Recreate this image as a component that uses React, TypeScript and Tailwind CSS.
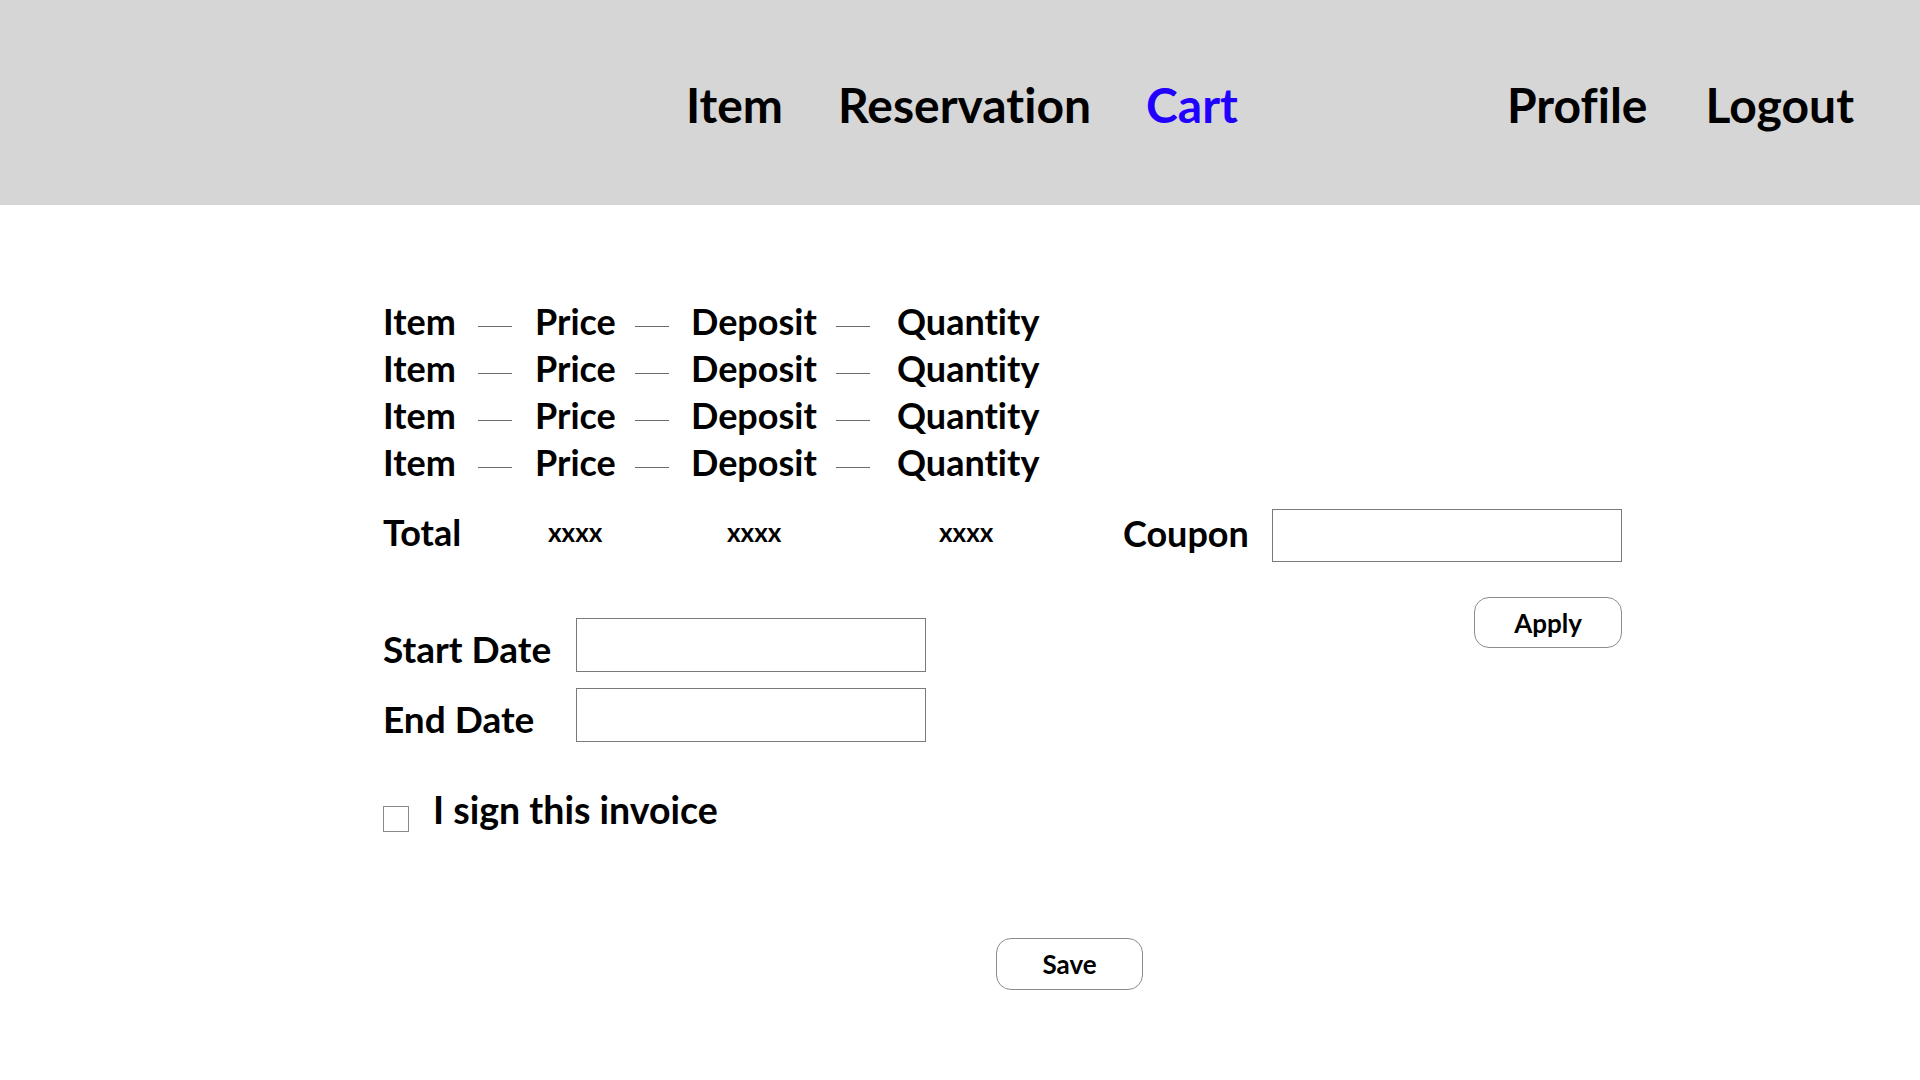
import React, { useState } from "react";

// Cart page – rental items with totals, coupon and rental dates
type Line = { item: string; price: string; deposit: string; quantity: string };

const lines: Line[] = [
  { item: "Item", price: "Price", deposit: "Deposit", quantity: "Quantity" },
  { item: "Item", price: "Price", deposit: "Deposit", quantity: "Quantity" },
  { item: "Item", price: "Price", deposit: "Deposit", quantity: "Quantity" },
  { item: "Item", price: "Price", deposit: "Deposit", quantity: "Quantity" },
];

const Dash: React.FC<{ w: string }> = ({ w }) => (
  <span className={`${w} flex pt-[28px]`}>
    <span className="block h-px w-[34px] bg-[#6b6b6b]" />
  </span>
);

const App: React.FC = () => {
  const [coupon, setCoupon] = useState("");
  const [start, setStart] = useState("");
  const [end, setEnd] = useState("");
  const [signed, setSigned] = useState(false);

  return (
    <div className="min-h-screen bg-white font-['Lato','Open_Sans',sans-serif] font-bold text-black [font-variant-ligatures:none]">
      {/* top nav */}
      <header className="flex h-[205px] items-center bg-[#d6d6d6] pl-[686px] pr-[66px] pt-[5px] text-[48px] leading-none">
        <nav className="flex gap-[55px]">
          <a className="cursor-pointer">Item</a>
          <a className="cursor-pointer">Reservation</a>
          <a className="cursor-pointer text-[#2200ff]">Cart</a>
        </nav>
        <nav className="ml-auto flex gap-[58px]">
          <a className="cursor-pointer">Profile</a>
          <a className="cursor-pointer">Logout</a>
        </nav>
      </header>

      <main className="w-[1622px] pl-[383px] pt-[93px]">
        {/* cart lines */}
        <div className="text-[36px] leading-[47px]">
          {lines.map((l, i) => (
            <div key={i} className="flex items-start">
              <span className="w-[95px]">{l.item}</span>
              <Dash w="w-[57px]" />
              <span className="w-[100px]">{l.price}</span>
              <Dash w="w-[56px]" />
              <span className="w-[145px]">{l.deposit}</span>
              <Dash w="w-[61px]" />
              <span>{l.quantity}</span>
            </div>
          ))}
        </div>

        {/* totals + coupon */}
        <div className="mt-[23px] flex h-[53px] items-center leading-[1.2]">
          <span className="w-[165px] pb-[5px] text-[36px]">Total</span>
          <span className="w-[179px] pb-[5px] text-[26px]">xxxx</span>
          <span className="w-[212px] pb-[5px] text-[26px]">xxxx</span>
          <span className="w-[184px] pb-[5px] text-[26px]">xxxx</span>
          <span className="w-[149px] pb-[3px] text-[36px]">Coupon</span>
          <input
            value={coupon}
            onChange={(e) => setCoupon(e.target.value)}
            className="h-[53px] w-[350px] border border-[#7a7a7a] px-3 text-[24px] font-normal outline-none"
          />
        </div>

        <div className="mt-[35px] flex justify-between">
          <div className="pt-[21px]">
            {/* rental dates */}
            <div className="flex flex-col gap-[16px]">
              <label className="flex h-[54px] items-center">
                <span className="w-[193px] pt-[8px] text-[37px] leading-[1.2]">Start Date</span>
                <input
                  value={start}
                  onChange={(e) => setStart(e.target.value)}
                  className="h-[54px] w-[350px] border border-[#7a7a7a] px-3 text-[24px] font-normal outline-none"
                />
              </label>
              <label className="flex h-[54px] items-center">
                <span className="w-[193px] pt-[8px] text-[37px] leading-[1.2]">End Date</span>
                <input
                  value={end}
                  onChange={(e) => setEnd(e.target.value)}
                  className="h-[54px] w-[350px] border border-[#7a7a7a] px-3 text-[24px] font-normal outline-none"
                />
              </label>
            </div>

            <label className="mt-[45px] flex cursor-pointer items-start gap-[24px]">
              <span
                onClick={() => setSigned(!signed)}
                className="mt-[19px] flex h-[26px] w-[26px] items-center justify-center border border-[#8a8a8a] text-[18px] leading-none"
              >
                {signed ? "✓" : ""}
              </span>
              <span className="text-[37.5px] leading-[1.2]">I sign this invoice</span>
            </label>
          </div>

          <button className="h-[51px] w-[148px] rounded-[15px] border border-[#8c8c8c] text-[26px] leading-none">
            Apply
          </button>
        </div>

        <div className="mt-[106px] pl-[613px]">
          <button className="h-[52px] w-[147px] rounded-[15px] border border-[#8c8c8c] text-[26px] leading-none">
            Save
          </button>
        </div>
      </main>
    </div>
  );
};

export default App;
